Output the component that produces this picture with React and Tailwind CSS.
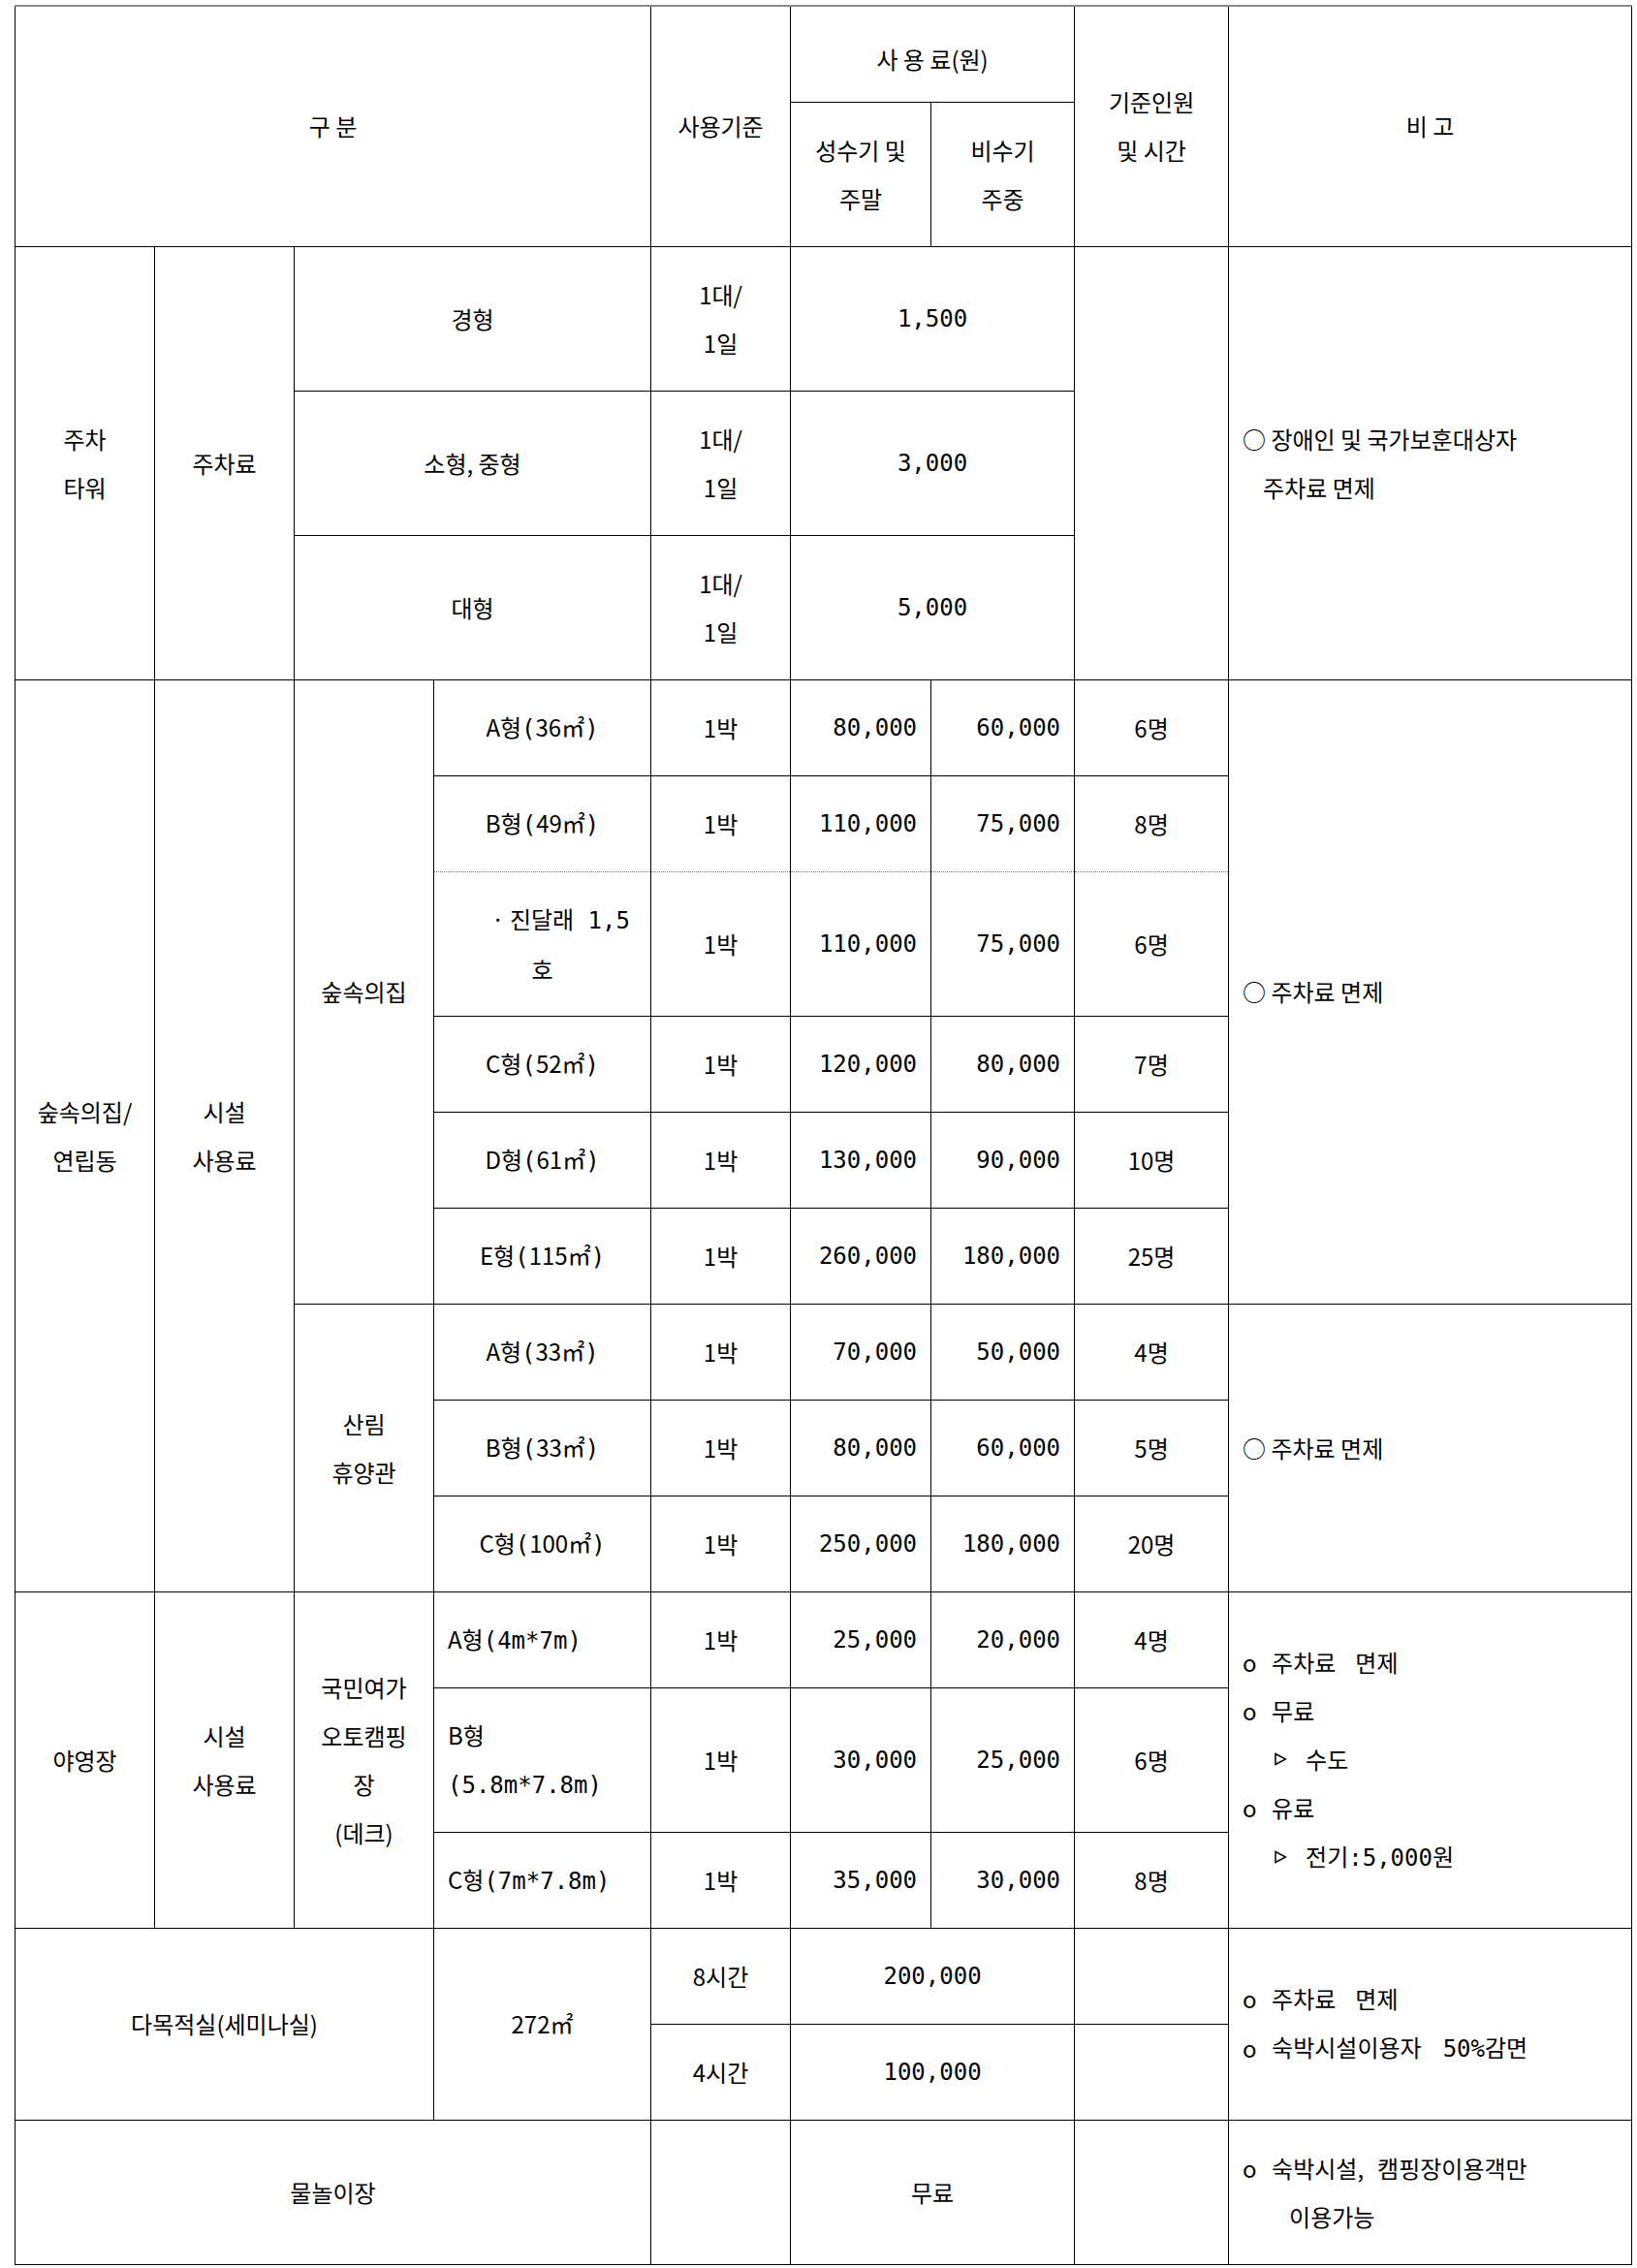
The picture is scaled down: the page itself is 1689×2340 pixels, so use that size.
import React from "react";

const M = ({ children }) => (
  <span className="font-['DejaVu_Sans_Mono','Noto_Sans_CJK_KR',monospace]">{children}</span>
);

const cell = "border border-black p-0 text-center align-middle";
const price = cell + " text-right pr-[14px] font-['DejaVu_Sans_Mono','Noto_Sans_CJK_KR',monospace]";
const mid = cell + " font-['DejaVu_Sans_Mono','Noto_Sans_CJK_KR',monospace]";
const remark = "border border-black p-0 pl-[14px] text-left align-middle";
const top = " border-t-2 border-t-[#8a8a8a]";
const dotB = " [border-bottom-style:dotted] border-b-[#777]";
const dotT = " [border-top-style:dotted] border-t-[#777]";

const Tri = () => (
  <svg width="14" height="14" viewBox="0 0 14 14" className="inline-block align-middle">
    <path d="M2 1.5 L12.5 7 L2 12.5 Z" fill="none" stroke="#000" strokeWidth="1.5" strokeLinejoin="miter" />
  </svg>
);

const Bul = ({ children, w = "w-[30px]" }) => (
  <div className="flex items-center">
    <span className={w + " shrink-0"}>o</span>
    <span className="whitespace-nowrap">{children}</span>
  </div>
);

function Room({ t, a, p1, p2, n, extra = "" }) {
  return (
    <>
      <td className={cell + extra}>
        {t}형<M>(</M>{a}㎡<M>)</M>
      </td>
      <td className={cell + extra}>1박</td>
      <td className={price + extra}>{p1}</td>
      <td className={price + extra}>{p2}</td>
      <td className={cell + extra}>{n}</td>
    </>
  );
}

export default function App() {
  return (
    <div className="bg-white min-h-[2340px] pt-[5px] pl-[15px] text-black text-[24px] leading-[50px] font-['Noto_Sans_CJK_KR',sans-serif]">
      <table className="table-fixed border-collapse w-[1668px]">
        <colgroup>
          <col className="w-[144px]" />
          <col className="w-[144px]" />
          <col className="w-[144px]" />
          <col className="w-[224px]" />
          <col className="w-[144px]" />
          <col className="w-[145px]" />
          <col className="w-[148px]" />
          <col className="w-[159px]" />
          <col className="w-[416px]" />
        </colgroup>
        <tbody>
          <tr className="h-[99px]">
            <td colSpan={4} rowSpan={2} className={cell + top}>구 분</td>
            <td rowSpan={2} className={cell + top}>사용기준</td>
            <td colSpan={2} className={cell + top + " pt-[10px]"}>사 용 료(원)</td>
            <td rowSpan={2} className={cell + top}>
              기준인원
              <br />및 시간
            </td>
            <td rowSpan={2} className={cell + top}>비 고</td>
          </tr>
          <tr className="h-[149px]">
            <td className={cell}>
              성수기 및
              <br />
              주말
            </td>
            <td className={cell}>
              비수기
              <br />
              주중
            </td>
          </tr>

          {/* 주차타워 */}
          <tr className="h-[149px]">
            <td rowSpan={3} className={cell}>
              주차
              <br />
              타워
            </td>
            <td rowSpan={3} className={cell}>주차료</td>
            <td colSpan={2} className={cell}>경형</td>
            <td className={cell}>
              1대/
              <br />
              1일
            </td>
            <td colSpan={2} className={mid}>1,500</td>
            <td rowSpan={3} className={cell}></td>
            <td rowSpan={3} className={remark}>
              <div>○ 장애인 및 국가보훈대상자</div>
              <div className="pl-[21px]">주차료 면제</div>
            </td>
          </tr>
          <tr className="h-[149px]">
            <td colSpan={2} className={cell}>소형, 중형</td>
            <td className={cell}>
              1대/
              <br />
              1일
            </td>
            <td colSpan={2} className={mid}>3,000</td>
          </tr>
          <tr className="h-[149px]">
            <td colSpan={2} className={cell}>대형</td>
            <td className={cell}>
              1대/
              <br />
              1일
            </td>
            <td colSpan={2} className={mid}>5,000</td>
          </tr>

          {/* 숲속의집 */}
          <tr className="h-[99px]">
            <td rowSpan={9} className={cell}>
              숲속의집/
              <br />
              연립동
            </td>
            <td rowSpan={9} className={cell}>
              시설
              <br />
              사용료
            </td>
            <td rowSpan={6} className={cell}>숲속의집</td>
            <Room t="A" a="36" p1="80,000" p2="60,000" n="6명" />
            <td rowSpan={6} className={remark}>○ 주차료 면제</td>
          </tr>
          <tr className="h-[99px]">
            <Room t="B" a="49" p1="110,000" p2="75,000" n="8명" extra={dotB} />
          </tr>
          <tr className="h-[149px]">
            <td className={cell + dotT}>
              <div className="pl-[38px] whitespace-nowrap">
                · 진달래<M> 1,5</M>
              </div>
              <div>호</div>
            </td>
            <td className={cell + dotT}>1박</td>
            <td className={price + dotT}>110,000</td>
            <td className={price + dotT}>75,000</td>
            <td className={cell + dotT}>6명</td>
          </tr>
          <tr className="h-[99px]">
            <Room t="C" a="52" p1="120,000" p2="80,000" n="7명" />
          </tr>
          <tr className="h-[99px]">
            <Room t="D" a="61" p1="130,000" p2="90,000" n="10명" />
          </tr>
          <tr className="h-[99px]">
            <Room t="E" a="115" p1="260,000" p2="180,000" n="25명" />
          </tr>
          <tr className="h-[99px]">
            <td rowSpan={3} className={cell}>
              산림
              <br />
              휴양관
            </td>
            <Room t="A" a="33" p1="70,000" p2="50,000" n="4명" />
            <td rowSpan={3} className={remark}>○ 주차료 면제</td>
          </tr>
          <tr className="h-[99px]">
            <Room t="B" a="33" p1="80,000" p2="60,000" n="5명" />
          </tr>
          <tr className="h-[99px]">
            <Room t="C" a="100" p1="250,000" p2="180,000" n="20명" />
          </tr>

          {/* 야영장 */}
          <tr className="h-[99px]">
            <td rowSpan={3} className={cell}>야영장</td>
            <td rowSpan={3} className={cell}>
              시설
              <br />
              사용료
            </td>
            <td rowSpan={3} className={cell}>
              국민여가
              <br />
              오토캠핑
              <br />
              장
              <br />
              (데크)
            </td>
            <td className={cell + " text-left pl-[14px]"}>
              A형<M>(4m*7m)</M>
            </td>
            <td className={cell}>1박</td>
            <td className={price}>25,000</td>
            <td className={price}>20,000</td>
            <td className={cell}>4명</td>
            <td rowSpan={3} className={remark}>
              <Bul>
                주차료<span className="ml-[20px]">면제</span>
              </Bul>
              <Bul>무료</Bul>
              <div className="flex items-center pl-[32px]">
                <span className="w-[33px] shrink-0 flex items-center">
                  <Tri />
                </span>
                <span>수도</span>
              </div>
              <Bul>유료</Bul>
              <div className="flex items-center pl-[32px]">
                <span className="w-[33px] shrink-0 flex items-center">
                  <Tri />
                </span>
                <span className="whitespace-nowrap">
                  전기<M>:5,000</M>원
                </span>
              </div>
            </td>
          </tr>
          <tr className="h-[149px]">
            <td className={cell + " text-left pl-[14px]"}>
              <div>B형</div>
              <div>
                <M>(5.8m*7.8m)</M>
              </div>
            </td>
            <td className={cell}>1박</td>
            <td className={price}>30,000</td>
            <td className={price}>25,000</td>
            <td className={cell}>6명</td>
          </tr>
          <tr className="h-[99px]">
            <td className={cell + " text-left pl-[14px]"}>
              C형<M>(7m*7.8m)</M>
            </td>
            <td className={cell}>1박</td>
            <td className={price}>35,000</td>
            <td className={price}>30,000</td>
            <td className={cell}>8명</td>
          </tr>

          {/* 다목적실 */}
          <tr className="h-[99px]">
            <td colSpan={3} rowSpan={2} className={cell}>다목적실(세미나실)</td>
            <td rowSpan={2} className={cell}>272㎡</td>
            <td className={cell}>8시간</td>
            <td colSpan={2} className={mid}>200,000</td>
            <td className={cell}></td>
            <td rowSpan={2} className={remark}>
              <Bul>
                주차료<span className="ml-[20px]">면제</span>
              </Bul>
              <Bul>
                숙박시설이용자<span className="ml-[22px]"><M>50%</M>감면</span>
              </Bul>
            </td>
          </tr>
          <tr className="h-[99px]">
            <td className={cell}>4시간</td>
            <td colSpan={2} className={mid}>100,000</td>
            <td className={cell}></td>
          </tr>

          {/* 물놀이장 */}
          <tr className="h-[149px]">
            <td colSpan={4} className={cell}>물놀이장</td>
            <td className={cell}></td>
            <td colSpan={2} className={cell}>무료</td>
            <td className={cell}></td>
            <td className={remark}>
              <Bul>
                숙박시설,<span className="ml-[14px]">캠핑장이용객만</span>
              </Bul>
              <div className="pl-[48px]">이용가능</div>
            </td>
          </tr>
        </tbody>
      </table>
    </div>
  );
}
